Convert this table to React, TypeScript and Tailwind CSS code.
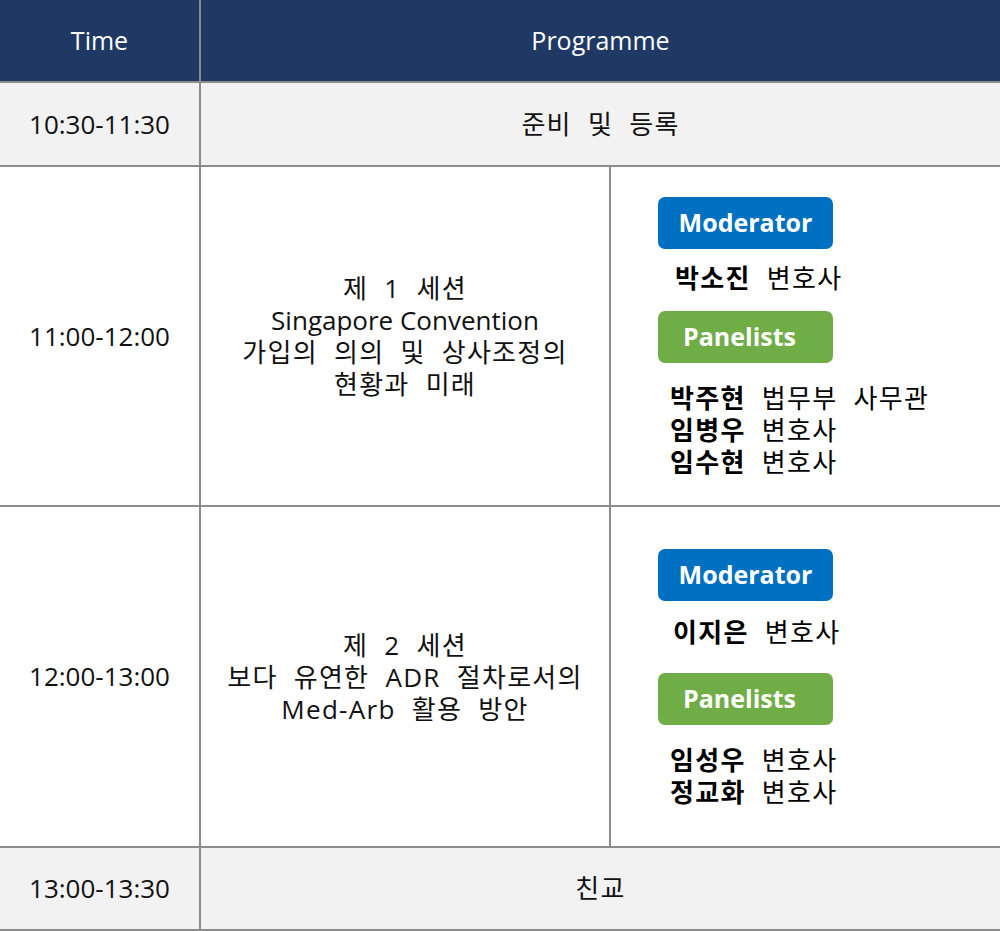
const FONT = { fontFamily: '"Open Sans", "Noto Sans CJK KR", sans-serif' };

// korean lines in the reference are a bit wider than Noto's
const KO = "tracking-[1.3px] [word-spacing:8px]";

type Person = { name: string; title: string };

const Badge = ({ label, color, shift = "" }: { label: string; color: string; shift?: string }) => (
  <div
    className={`w-[175px] h-[52px] rounded-[7px] flex items-center justify-center text-white font-bold text-[25px] ${color} ${shift}`}
  >
    {label}
  </div>
);

const People = ({ list, className }: { list: Person[]; className: string }) => (
  <div className={`pl-[12px] text-[26px] leading-[32px] text-black ${KO} ${className}`}>
    {list.map((p) => (
      <div key={p.name} className="whitespace-nowrap">
        <span className="font-bold">{p.name}</span> {p.title}
      </div>
    ))}
  </div>
);

const App = () => {
  return (
    <div style={FONT} className="w-[1000px] text-[26px] text-[#111] bg-white">
      <div className="flex h-[83px] bg-[#203864] text-white border-b-2 border-[#8c8c8c]">
        <div className="w-[201px] border-r-2 border-[#8c8c8c] flex items-center justify-center text-[25px]">
          Time
        </div>
        <div className="flex-1 flex items-center justify-center text-[25px]">Programme</div>
      </div>

      <div className="flex h-[84px] bg-[#f2f2f2] border-b-2 border-[#8c8c8c]">
        <div className="w-[201px] border-r-2 border-[#8c8c8c] flex items-center justify-center">
          10:30-11:30
        </div>
        <div className={`flex-1 flex items-center justify-center ${KO}`}>준비 및 등록</div>
      </div>

      <div className="flex h-[340px] border-b-2 border-[#8c8c8c]">
        <div className="w-[201px] border-r-2 border-[#8c8c8c] flex items-center justify-center">
          11:00-12:00
        </div>
        <div className="w-[410px] border-r-2 border-[#8c8c8c] flex flex-col items-center justify-center text-center leading-[32px]">
          <div className={KO}>제 1 세션</div>
          <div>Singapore Convention</div>
          <div className={KO}>가입의 의의 및 상사조정의</div>
          <div className={KO}>현황과 미래</div>
        </div>
        <div className="flex-1 pl-[47px] pt-[30px]">
          <Badge label="Moderator" color="bg-[#0070c0]" />
          <People className="mt-[13px] pl-[17px]" list={[{ name: "박소진", title: "변호사" }]} />
          <div className="mt-[17px]">
            <Badge label="Panelists" color="bg-[#70ad47]" shift="pr-[12px]" />
          </div>
          <People
            className="mt-[19px]"
            list={[
              { name: "박주현", title: "법무부 사무관" },
              { name: "임병우", title: "변호사" },
              { name: "임수현", title: "변호사" },
            ]}
          />
        </div>
      </div>

      <div className="flex h-[341px] border-b-2 border-[#8c8c8c]">
        <div className="w-[201px] border-r-2 border-[#8c8c8c] flex items-center justify-center">
          12:00-13:00
        </div>
        <div className="w-[410px] border-r-2 border-[#8c8c8c] flex flex-col items-center justify-center text-center leading-[32px]">
          <div className={KO}>제 2 세션</div>
          <div className={KO}>보다 유연한 ADR 절차로서의</div>
          <div className={KO}>Med-Arb 활용 방안</div>
        </div>
        <div className="flex-1 pl-[47px] pt-[42px]">
          <Badge label="Moderator" color="bg-[#0070c0]" />
          <People className="mt-[15px] pl-[15px]" list={[{ name: "이지은", title: "변호사" }]} />
          <div className="mt-[25px]">
            <Badge label="Panelists" color="bg-[#70ad47]" shift="pr-[12px]" />
          </div>
          <People
            className="mt-[19px]"
            list={[
              { name: "임성우", title: "변호사" },
              { name: "정교화", title: "변호사" },
            ]}
          />
        </div>
      </div>

      <div className="flex h-[83px] bg-[#f2f2f2] border-b-2 border-[#8c8c8c]">
        <div className="w-[201px] border-r-2 border-[#8c8c8c] flex items-center justify-center">
          13:00-13:30
        </div>
        <div className={`flex-1 flex items-center justify-center ${KO}`}>친교</div>
      </div>
    </div>
  );
};

export default App;
